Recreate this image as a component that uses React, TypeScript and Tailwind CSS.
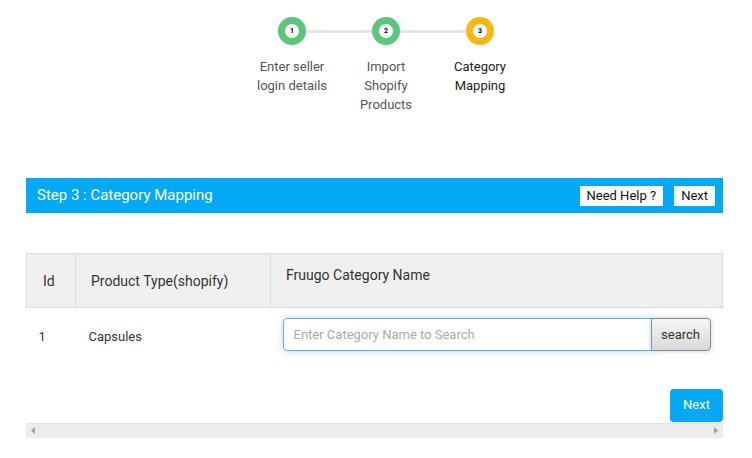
import { useState } from "react"

const steps = [
  { n: 1, label: ["Enter seller", "login details"], done: true },
  { n: 2, label: ["Import", "Shopify", "Products"], done: true },
  { n: 3, label: ["Category", "Mapping"], done: false },
]

function Stepper() {
  return (
    <div className="relative flex pl-[245px] pt-[17px]">
      {/* connector line behind the circles */}
      <div className="absolute left-[292px] top-[30px] h-[3px] w-[187px] bg-[#e6e6e6]" />
      {steps.map((s) => (
        <div key={s.n} className="relative flex w-[94px] flex-col items-center">
          <div
            className={
              "flex h-[28px] w-[28px] items-center justify-center rounded-full " +
              (s.done ? "bg-[#5cc77b]" : "bg-[#f7b80f]")
            }
          >
            <div className="flex h-[14px] w-[14px] items-center justify-center rounded-full bg-white text-[7px] font-bold leading-none text-black">
              {s.n}
            </div>
          </div>
          <div
            className={
              "mt-[12px] text-center text-[13px] leading-[19px] " +
              (s.done ? "text-[#555]" : "text-[#222]")
            }
          >
            {s.label.map((l) => (
              <div key={l}>{l}</div>
            ))}
          </div>
        </div>
      ))}
    </div>
  )
}

export default function App() {
  const [query, setQuery] = useState("")

  return (
    <div className="h-[458px] w-[752px] overflow-hidden bg-white font-['Roboto',sans-serif] text-[#333]">
      <Stepper />

      <div className="ml-[26px] mt-[64px] w-[697px]">
        <div className="flex h-[35px] items-center justify-between bg-[#03a9f4] pl-[11px] pr-[8px]">
          <span className="text-[15px] text-white">Step 3 : Category Mapping</span>
          <div className="flex gap-[11px]">
            <button className="h-[20px] bg-white px-[7px] text-[13px] leading-[20px] text-[#111]">Need Help ?</button>
            <button className="h-[20px] bg-white px-[7px] text-[13px] leading-[20px] text-[#111]">Next</button>
          </div>
        </div>

        <table className="mt-[40px] w-full border-collapse text-[14px]">
          <thead>
            <tr className="h-[54px] bg-[#f0f0f0]">
              <th className="w-[49px] border border-[#dddddd] pl-[16px] pt-[2px] text-left align-middle font-normal text-[#333]">Id</th>
              <th className="w-[195px] border border-[#dddddd] pl-[15px] pt-[2px] text-left align-middle font-normal text-[#333]">
                Product Type(shopify)
              </th>
              <th className="border border-[#dddddd] pl-[15px] pt-[11px] text-left align-top font-normal text-[#333]">
                Fruugo Category Name
              </th>
            </tr>
          </thead>
          <tbody>
            <tr className="h-[58px] text-[13px]">
              <td className="pl-[12px] text-left">1</td>
              <td className="pl-[13px]">Capsules</td>
              <td className="px-[12px] pt-[10px] align-top">
                <div className="flex h-[33px]">
                  <input
                    value={query}
                    onChange={(e) => setQuery(e.target.value)}
                    placeholder="Enter Category Name to Search"
                    className="h-full flex-1 rounded-l-[4px] border border-[#66afe9] px-[10px] text-[13px] text-[#555] shadow-[0_0_6px_rgba(102,175,233,0.5)] outline-none placeholder:text-[#aaa]"
                  />
                  <button className="-ml-px h-full w-[60px] rounded-r-[4px] border border-[#8a8a8a] bg-gradient-to-b from-[#f5f5f5] to-[#d9d9d9] text-[13px] text-[#333] shadow-[0_0_5px_rgba(102,175,233,0.5)]">
                    search
                  </button>
                </div>
              </td>
            </tr>
          </tbody>
        </table>

        <div className="mt-[23px] flex justify-end">
          <button className="h-[33px] w-[53px] rounded-[4px] bg-[#03a9f4] text-[13px] text-white">Next</button>
        </div>

        <div className="mt-[1px] flex h-[15px] items-center justify-between border-t border-[#e2e2e2] bg-[#ececec] px-[5px]">
          <svg width="4" height="7" viewBox="0 0 4 7">
            <path d="M4 0 L0 3.5 L4 7 Z" fill="#a0a0a0" />
          </svg>
          <svg width="4" height="7" viewBox="0 0 4 7">
            <path d="M0 0 L4 3.5 L0 7 Z" fill="#a0a0a0" />
          </svg>
        </div>
      </div>
    </div>
  )
}
